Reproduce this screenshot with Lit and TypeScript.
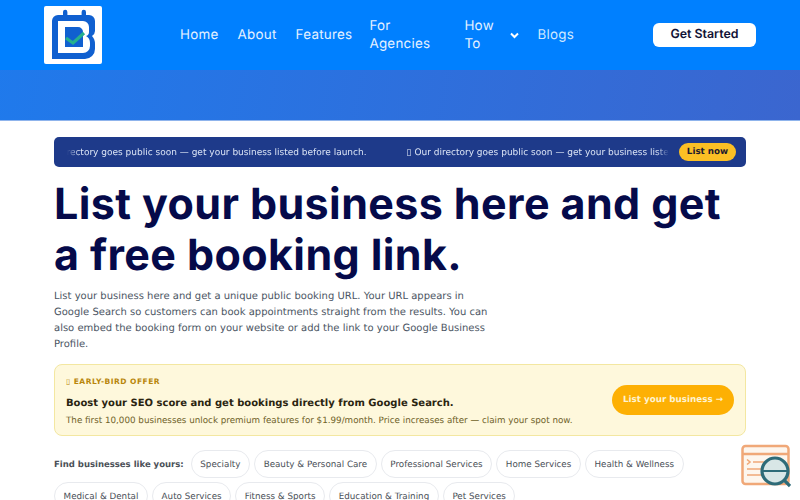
import { LitElement, html, css } from "lit";
import { customElement } from "lit/decorators.js";

const MSG = "▯ Our directory goes public soon — get your business listed before launch.";
const ROW1 = ["Specialty", "Beauty & Personal Care", "Professional Services", "Home Services", "Health & Wellness"];
const ROW2 = ["Medical & Dental", "Auto Services", "Fitness & Sports", "Education & Training", "Pet Services"];

@customElement("app-root")
export class AppRoot extends LitElement {
  static styles = css`
    :host { display: block; width: 800px; height: 500px; overflow: hidden; background: #fff; font-family: "DejaVu Sans", sans-serif; text-rendering: geometricPrecision; }
    .top { height: 121px; background: linear-gradient(100deg, #1f7aec 0%, #3b66cf 100%); border-bottom: 1px solid #8fb4ec; box-sizing: border-box; }
    .nav { height: 70px; background: #0080ff; display: flex; align-items: center; padding: 0 44px; box-sizing: border-box; }
    .logo { width: 58px; height: 58px; background: #fff; border-radius: 2px; flex: none; display: block; }
    .links { display: flex; align-items: center; gap: 19px; margin-left: 78px; font-family: Inter, sans-serif; font-size: 13.4px; line-height: 18px; color: #e4f1ff; letter-spacing: 0.25px; }
    .links a { display: block; }
    .agency { width: 76px; margin-left: -2px; }
    .howto { width: 32px; }
    .chev { margin-left: -5px; display: block; }
    .blogs { color: #cfe8ff; margin-left: -1px; }
    .cta { margin-left: auto; width: 103px; height: 24px; border-radius: 6px; background: #fff; color: #111235; font-family: Inter, sans-serif; font-weight: 600; font-size: 12.4px; line-height: 22px; display: flex; align-items: flex-start; justify-content: center; }
    main { padding: 16px 54px 0; }
    .ticker { height: 30px; border-radius: 5px; background: #1e3a8a; display: flex; align-items: center; padding: 0 10px 0 13px; gap: 10px; }
    .track { flex: 1; overflow: hidden; white-space: nowrap; font-size: 9px; padding-top: 1px; color: #dbe4f5; display: flex; gap: 40px; -webkit-mask-image: linear-gradient(90deg, transparent 0, #000 12px, #000 calc(100% - 12px), transparent 100%); mask-image: linear-gradient(90deg, transparent 0, #000 12px, #000 calc(100% - 12px), transparent 100%); }
    .track span { flex: none; }
    .first { margin-left: -36px; }
    .now { flex: none; width: 57px; height: 18px; border-radius: 9px; background: #fbbf24; color: #1e1b2e; font-size: 8.75px; font-weight: 700; display: flex; align-items: center; justify-content: center; }
    h1 { margin: 12px 0 0; font-family: Inter, sans-serif; font-weight: 700; font-size: 43px; line-height: 51px; color: #050a4a; letter-spacing: 0.4px; }
    .lead { margin: 8px 0 0; width: 440px; font-size: 10px; line-height: 16px; color: #4b5563; }
    .offer { margin-top: 11px; height: 72px; box-sizing: border-box; border: 1px solid #f3e7a1; border-radius: 8px; background: #fef8dc; display: flex; align-items: center; justify-content: space-between; padding: 0 11px; }
    .copy { padding-top: 2px; }
    .tag { font-size: 7.5px; font-weight: 700; letter-spacing: 0.5px; color: #b8860b; }
    .head { font-size: 10px; font-weight: 700; color: #2a2410; margin-top: 12px; }
    .sub { font-size: 8.75px; color: #6e6128; margin-top: 7px; }
    .btn { width: 122px; height: 30px; border-radius: 15px; background: #fdb004; color: #fdf3d0; font-size: 8.75px; font-weight: 700; display: flex; align-items: center; justify-content: center; }
    .chips { display: flex; flex-wrap: wrap; align-items: center; gap: 4px; margin-top: 14px; }
    .label { font-size: 8.5px; font-weight: 700; color: #4a4f57; margin-right: 3px; padding-top: 1px; }
    .chip { height: 28px; box-sizing: border-box; padding: 1px 8.6px 0; border: 1px solid #e8eaee; border-radius: 14px; font-size: 8.75px; color: #4a4f57; display: flex; align-items: center; }
    .widget { position: absolute; left: 741px; top: 444px; display: block; }
  `;

  render() {
    return html`
      <div class="top">
        <div class="nav">
          <svg class="logo" viewBox="0 0 58 58">
            <path fill="#1060d0" d="M19 9 V6 a2.2 2.2 0 0 1 4.4 0 V9 H37.6 V6 a2.2 2.2 0 0 1 4.4 0 V9 H45 a6 6 0 0 1 6 6 V25 q0 3 -3 5 q3 3 3 8 V43 a10 10 0 0 1 -10 10 H8 V15 a6 6 0 0 1 6 -6 Z"/>
            <path fill="#fff" fill-rule="evenodd" d="M14 15 H39 a6 6 0 0 1 6 6 V26 q0 3 -3 4 q4 2 4 7 v3 a7 7 0 0 1 -7 7 H14 Z M21 21 H34 a5 5 0 0 1 5 5 V41 H21 Z"/>
            <path fill="none" stroke="#25b08e" stroke-width="3.2" d="M22 32 l7 5 l11 -10"/>
          </svg>
          <div class="links">
            <a>Home</a><a>About</a><a>Features</a>
            <a class="agency">For Agencies</a>
            <a class="howto">How To</a>
            <svg class="chev" width="9" height="7" viewBox="0 0 9 7"><path d="M1 1.5 L4.5 5 L8 1.5" fill="none" stroke="#fff" stroke-width="2"/></svg>
            <a class="blogs">Blogs</a>
          </div>
          <div class="cta">Get Started</div>
        </div>
      </div>
      <main>
        <div class="ticker">
          <div class="track"><span class="first">${MSG}</span><span>${MSG}</span></div>
          <div class="now">List now</div>
        </div>
        <h1>List your business here and get a free booking link.</h1>
        <p class="lead">List your business here and get a unique public booking URL. Your URL appears in Google Search so customers can book appointments straight from the results. You can also embed the booking form on your website or add the link to your Google Business Profile.</p>
        <div class="offer">
          <div class="copy">
            <div class="tag">▯ EARLY-BIRD OFFER</div>
            <div class="head">Boost your SEO score and get bookings directly from Google Search.</div>
            <div class="sub">The first 10,000 businesses unlock premium features for $1.99/month. Price increases after — claim your spot now.</div>
          </div>
          <div class="btn">List your business →</div>
        </div>
        <div class="chips">
          <span class="label">Find businesses like yours:</span>
          ${ROW1.map((c) => html`<span class="chip">${c}</span>`)}
          ${ROW2.map((c) => html`<span class="chip">${c}</span>`)}
        </div>
      </main>
      <svg class="widget" width="50" height="46" viewBox="0 0 50 46">
        <rect x="1.5" y="2" width="46" height="38" rx="3" fill="#fdf6ee" stroke="#f0a878" stroke-width="2.5"/>
        <path d="M2 10 H47" stroke="#f0a878" stroke-width="2.5"/>
        <path d="M6 15.5 l3 2.5 l-3 2.5 M12 18 H26 M6 25 H24 M6 31 H24" fill="none" stroke="#f0a878" stroke-width="1.6"/>
        <circle cx="34" cy="27" r="13" fill="#d8e6e6" stroke="#2e6b78" stroke-width="3.2"/>
        <path d="M22 27 H46" stroke="#2e6b78" stroke-width="2"/>
        <path d="M43 36 L49 42" stroke="#2e6b78" stroke-width="3.2"/>
      </svg>
    `;
  }
}
